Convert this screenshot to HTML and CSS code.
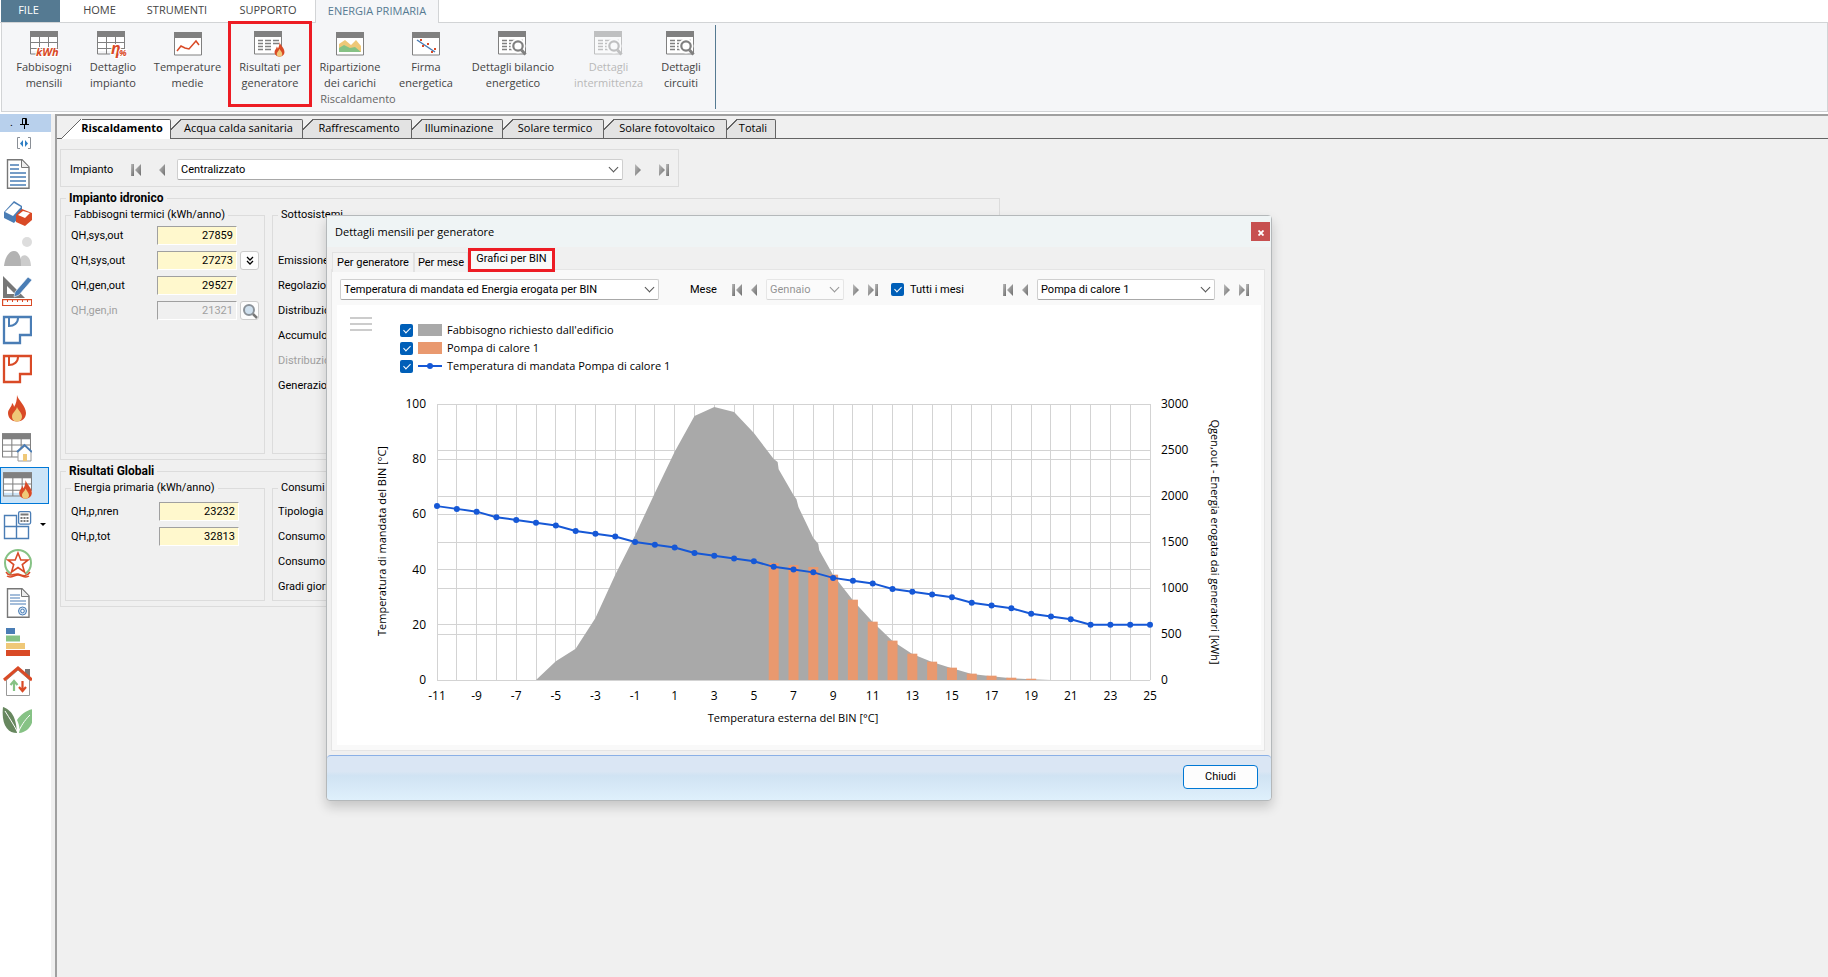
FILE: index.html
```html
<!DOCTYPE html>
<html lang="it">
<head>
    <meta charset="UTF-8">
    <meta name="viewport" content="width=device-width, initial-scale=1.0">
    <title>Energia primaria</title>
    <link rel="stylesheet" href="styles.css">
</head>
<body>
    <!-- Shared symbols -->
    <svg class="sprite" width="0" height="0">
        <defs>
            <linearGradient id="metal" x1="0" y1="0" x2="1" y2="1">
                <stop offset="0" stop-color="#bdbdbd"/>
                <stop offset="1" stop-color="#6e6e6e"/>
            </linearGradient>
            <symbol id="first" viewBox="0 0 10 12"><path d="M0 0h3v12H0z" fill="url(#metal)"/><path d="M10 0v12L4 6z" fill="url(#metal)"/></symbol>
            <symbol id="prev" viewBox="0 0 6 12"><path d="M6 0v12L0 6z" fill="url(#metal)"/></symbol>
            <symbol id="next" viewBox="0 0 6 12"><path d="M0 0v12L6 6z" fill="url(#metal)"/></symbol>
            <symbol id="last" viewBox="0 0 10 12"><path d="M0 0v12L6 6z" fill="url(#metal)"/><path d="M7 0h3v12H7z" fill="url(#metal)"/></symbol>
            <symbol id="window" viewBox="0 0 28 24"><path d="M.5 1.500h27v21.500H.5z" fill="#fff" stroke="#808080"/><path d="M0 0h28v6H0z" fill="#808080"/></symbol>
            <symbol id="grid" viewBox="0 0 28 24"><path d="M0 0h28v20H0z" fill="#fff"/><path d="M.5 5v18H24M9.500 5v18M18.500 5v13M27.500 5v12M0 11.500h28M0 17.500h28" fill="none" stroke="#808080"/><path d="M0 0h28v6H0z" fill="#808080"/></symbol>
            <symbol id="rows" viewBox="0 0 28 24"><use href="#window"/><path d="M4 9.500h5M4 12.500h5M4 15.500h5M4 18.500h5M11 9.500h6M11 12.500h6M11 15.500h6M11 18.500h6M19 9.500h6M19 12.500h6" stroke="#808080" stroke-width="1.300"/></symbol>
            <symbol id="rows-zoom" viewBox="0 0 30 25"><use href="#rows" width="28" height="24"/><circle cx="20" cy="15" r="5" fill="#fff" stroke="#fff" stroke-width="5"/><circle cx="20" cy="15" r="4.700" fill="#fff" stroke="#808080" stroke-width="2.200"/><path d="M23.500 19l4 4.500" stroke="#808080" stroke-width="3"/></symbol>
            <symbol id="flame" viewBox="0 0 20 27"><path d="M10 0c1 5 9 11 9 18 0 5-4 8.500-9 8.500S1 23 1 18C1 14 5 12 5 8c1 1 2 2 2 4 2-3 3-7 3-12z" fill="#d94a26"/><path d="M10 12c1 3 5 6 5 9.500 0 3-2 5-5 5s-5-2-5-5C5 18 9 16 10 12z" fill="#efc878"/></symbol>
            <symbol id="plan" viewBox="0 0 30 30"><path d="M2 2h27v18H18v8H2z" fill="#fff" stroke="currentColor" stroke-width="2.300"/><path d="M7 3v8c5 0 9-3 9-8" fill="none" stroke="currentColor" stroke-width="2"/></symbol>
        </defs>
    </svg>

    <header class="ribbon">
        <nav class="ribbon-tabs">
            <button class="file">FILE</button>
            <button class="home">HOME</button>
            <button class="tools">STRUMENTI</button>
            <button class="support">SUPPORTO</button>
            <button class="active">ENERGIA PRIMARIA</button>
        </nav>
        <div class="ribbon-body">
            <div class="ribbon-group">
                <div class="ribbon-buttons">
                    <button>
                        <svg width="36" height="28" viewBox="-2 0 36 28"><use href="#grid" x="2" width="28" height="24"/><text class="icon-text" x="8" y="25" font-size="11">kWh</text></svg>
                        <span>Fabbisogni<br>mensili</span>
                    </button>
                    <button>
                        <svg width="36" height="28" viewBox="-2 0 36 28"><use href="#grid" width="28" height="24"/><text class="icon-text" x="14" y="23" font-size="16">η</text><text class="icon-text" x="22" y="25" font-size="9">%</text></svg>
                        <span>Dettaglio<br>impianto</span>
                    </button>
                    <button>
                        <svg width="32" height="28" viewBox="0 0 32 28"><use href="#window" x="2" y="1" width="28" height="24"/><path d="M5 20l4-5 4 2 4 1 7-8 3 4" fill="none" stroke="#d94a26" stroke-width="1.500"/></svg>
                        <span>Temperature<br>medie</span>
                    </button>
                    <button class="marked">
                        <svg width="32" height="28" viewBox="0 0 32 28"><use href="#rows" width="28" height="24"/><use href="#flame" x="20" y="11" width="11" height="15"/></svg>
                        <span>Risultati per<br>generatore</span>
                    </button>
                    <button>
                        <svg width="32" height="28" viewBox="0 0 32 28"><use href="#window" x="2" y="1" width="28" height="24"/><path d="M5 21V13l6-4 6 5 5-5 5 6v6z" fill="#efc878"/><path d="M5 21v-4l5-3 6 3 5-1 6 5z" fill="#86c285"/></svg>
                        <span>Ripartizione<br>dei carichi</span>
                    </button>
                    <button>
                        <svg width="32" height="28" viewBox="0 0 32 28"><use href="#window" x="2" y="1" width="28" height="24"/><path d="M7 9l18 12" stroke="#4a7db5" stroke-width="1.500"/><path d="M10 8h2v2h-2zM17 12h2v2h-2zM12 14h2v2h-2zM21 20h2v2h-2zM24 17h2v2h-2z" fill="#d94a26"/></svg>
                        <span>Firma<br>energetica</span>
                    </button>
                    <button>
                        <svg width="30" height="28" viewBox="0 0 30 28"><use href="#rows-zoom" width="30" height="25"/></svg>
                        <span>Dettagli bilancio<br>energetico</span>
                    </button>
                    <button disabled>
                        <svg width="30" height="28" viewBox="0 0 30 28"><use href="#rows-zoom" width="30" height="25"/></svg>
                        <span>Dettagli<br>intermittenza</span>
                    </button>
                    <button>
                        <svg width="30" height="28" viewBox="0 0 30 28"><use href="#rows-zoom" width="30" height="25"/></svg>
                        <span>Dettagli<br>circuiti</span>
                    </button>
                </div>
                <div class="group-name">Riscaldamento</div>
            </div>
        </div>
    </header>

    <div class="workspace">
        <aside class="sidebar">
            <div class="pin-bar">
                <span>.</span>
                <svg width="9" height="12" viewBox="0 0 9 12"><path d="M2.500 7V1.500h4V7M5.500 1v6M0 7.500h9M4.500 8v4" fill="none" stroke="#000"/></svg>
            </div>
            <button class="collapse" aria-label="Comprimi">
                <svg width="14" height="12" viewBox="0 0 14 12"><path d="M3 .5H.5v11H3M11 .5h2.500v11H11" fill="none" stroke="#8a8f96"/><path d="M6 3v7L3 6.500zM8 3v7l3-3.500z" fill="#2f7fc4"/></svg>
            </button>
            <button aria-label="Relazione">
                <svg viewBox="0 0 30 30"><path d="M5.500.7H20L27 8v21.300H5.500z" fill="#fff" stroke="#777" stroke-width="1.400"/><path d="M19.500 1v7.500H27" fill="#eee" stroke="#777"/><path d="M8 6h9M8 10h9M8 14h16M8 18h16M8 22h16M8 26h16" stroke="#4a7db5" stroke-width="1.300"/></svg>
            </button>
            <button aria-label="Strutture">
                <svg viewBox="0 0 30 30"><path d="M2 14L12 3l8 5v8l-8 9-10-5z" fill="#4a7db5"/><path d="M3 14l9-9 7 4-8 9z" fill="#fff"/><path d="M14 17l6-6 10 4v7l-7 6-9-4z" fill="#d94a26"/><path d="M16 17l5-4 7 2-5 5z" fill="#fff"/></svg>
            </button>
            <button aria-label="Ombreggiamenti">
                <svg viewBox="0 0 30 30"><circle cx="25" cy="5" r="5" fill="#ddd"/><path d="M2 29c1-9 5-15 10-15s7 6 8 15z" fill="#b3b3b3"/><path d="M19 29c0-5-1-8 1-10 5-3 9 3 9 10z" fill="#ccc"/></svg>
            </button>
            <button aria-label="Disegno">
                <svg viewBox="0 0 30 30"><path d="M1 0l22 22H1z" fill="#777"/><path d="M5 10l8 8H5z" fill="#fff"/><path d="M12 21l1-5L26 1l4 3-13 15z" fill="#4a7db5" stroke="#fff" stroke-width=".6"/><path d="M.6 23.600h29v6H.6z" fill="#fff" stroke="#d94a26" stroke-width="1.200"/><path d="M5.500 24v2M10.500 24v2M15.500 24v2M20.500 24v2M25.500 24v2" stroke="#d94a26"/></svg>
            </button>
            <button class="blue" aria-label="Locali">
                <svg viewBox="0 0 30 30"><use href="#plan"/></svg>
            </button>
            <button class="red" aria-label="Zone">
                <svg viewBox="0 0 30 30"><use href="#plan"/></svg>
            </button>
            <button aria-label="Centrale termica">
                <svg viewBox="0 0 30 30"><use href="#flame" x="5" y="2" width="20" height="27"/></svg>
            </button>
            <button aria-label="Risultati fabbricato">
                <svg viewBox="0 0 30 30"><use href="#grid" x="0" y="1" width="29" height="25"/><path d="M16 20v9h13v-9l-6-6z" fill="#fff" stroke="#999"/><path d="M15 20l7.500-7 7.500 7" fill="none" stroke="#4a7db5" stroke-width="2"/><path d="M21 22h4v7h-4z" fill="#efc878"/></svg>
            </button>
            <button class="selected" aria-label="Energia primaria">
                <svg viewBox="0 0 30 30"><use href="#grid" x="1" y="1" width="29" height="25"/><use href="#flame" x="16" y="9" width="15" height="19"/></svg>
            </button>
            <button class="with-arrow" aria-label="Calcolo">
                <svg viewBox="0 0 30 30"><path d="M2.500 5.500h12v23h-12zM2.500 16.500h24v12h-24M14.500 16v12" fill="#fff" stroke="#4a7db5" stroke-width="1.400"/><rect x="16.600" y="1.600" width="12" height="12.500" rx="1.500" fill="#fff" stroke="#4a7db5" stroke-width="1.300"/><path d="M18.500 4.500h8M18.500 8h2M21.500 8h2M24.500 8h2M18.500 11h2M21.500 11h2M24.500 11h2" stroke="#777" stroke-width="1.800"/></svg>
            </button>
            <button aria-label="Legge 10">
                <svg viewBox="0 0 30 30"><circle cx="16" cy="14" r="13" fill="none" stroke="#86c285" stroke-width="2" stroke-dasharray="68 14" stroke-dashoffset="-27"/><path d="M16 4l2.800 7H26l-5.700 4.500 2.200 7.500-6.500-4.500L9.500 23l2.200-7.500L6 11h7.200z" fill="#fff" stroke="#d94a26" stroke-width="1.600"/><path d="M4 23c4 6 8 1 12 2s8 4 12-2M5 27c4 3 7-1 11-1s7 4 11 1" fill="none" stroke="#d94a26" stroke-width="1.500"/></svg>
            </button>
            <button aria-label="Attestato">
                <svg viewBox="0 0 30 30"><path d="M5.500.7H20L27 8v21.300H5.500z" fill="#fff" stroke="#777" stroke-width="1.400"/><path d="M19.500 1v7.500H27" fill="#eee" stroke="#777"/><path d="M8 7h10M8 10h10M8 13h16M8 16h16" stroke="#4a7db5" stroke-width="1.200"/><circle cx="20.500" cy="23" r="4" fill="#cfe0f2" stroke="#4a7db5"/><circle cx="20.500" cy="23" r="1.800" fill="#fff" stroke="#4a7db5"/></svg>
            </button>
            <button aria-label="Classi energetiche">
                <svg viewBox="0 0 30 30"><path d="M4 1h9v6H4z" fill="#4a7db5"/><path d="M4 8.500h14v6H4z" fill="#86c285"/><path d="M4 16h19v6H4z" fill="#efc878"/><path d="M4 23h24v6H4z" fill="#d94a26"/></svg>
            </button>
            <button aria-label="Interventi">
                <svg viewBox="0 0 30 30"><path d="M23 3h5v11h-5z" fill="#777"/><path d="M4.500 14v15.500h23V14L16 4z" fill="#fff" stroke="#999"/><path d="M2 14L16 2l14 12" fill="none" stroke="#d94a26" stroke-width="3"/><path d="M12 25V16M8.500 19l3.500-4 3.500 4" fill="none" stroke="#86c285" stroke-width="2.200"/><path d="M20.500 15v9M17 21l3.500 4 3.500-4" fill="none" stroke="#d94a26" stroke-width="2.200"/></svg>
            </button>
            <button aria-label="Ambiente">
                <svg viewBox="0 0 30 30"><path d="M1 2c8 3 13 9 14 26C6 28-1 20 1 2z" fill="#67875f"/><path d="M31 4c-6 1-12 5-16 11 2 4 3 8 2 13 10-1 16-10 14-24z" fill="#86c285"/><path d="M3 6c5 8 9 14 13 22 3-7 6-12 12-18" fill="none" stroke="#fff"/></svg>
            </button>
        </aside>

        <main class="main">
            <nav class="tabs">
                <button class="active">Riscaldamento</button>
                <button>Acqua calda sanitaria</button>
                <button>Raffrescamento</button>
                <button>Illuminazione</button>
                <button>Solare termico</button>
                <button>Solare fotovoltaico</button>
                <button>Totali</button>
            </nav>

            <div class="page">
                <div class="plant-bar">
                    <label for="plant">Impianto</label>
                    <button class="nav" aria-label="Primo"><svg width="10" height="12"><use href="#first"/></svg></button>
                    <button class="nav" aria-label="Precedente"><svg width="6" height="12"><use href="#prev"/></svg></button>
                    <span class="select"><select id="plant"><option>Centralizzato</option></select></span>
                    <button class="nav" aria-label="Successivo"><svg width="6" height="12"><use href="#next"/></svg></button>
                    <button class="nav" aria-label="Ultimo"><svg width="10" height="12"><use href="#last"/></svg></button>
                </div>

                <fieldset class="group hydronic">
                    <legend>Impianto idronico</legend>
                    <div class="columns">
                        <fieldset class="box">
                            <legend>Fabbisogni termici (kWh/anno)</legend>
                            <div class="field"><label for="sys">QH,sys,out</label><input id="sys" type="text" value="27859" readonly></div>
                            <div class="field"><label for="sys2">Q'H,sys,out</label><input id="sys2" type="text" value="27273" readonly>
                                <button class="mini" aria-label="Espandi"><svg width="8" height="10" viewBox="0 0 8 10"><path d="M1 1l3 3 3-3M1 5l3 3 3-3" fill="none" stroke="#000" stroke-width="1.300"/></svg></button>
                            </div>
                            <div class="field"><label for="gen">QH,gen,out</label><input id="gen" type="text" value="29527" readonly></div>
                            <div class="field"><label for="genin" class="off">QH,gen,in</label><input id="genin" type="text" value="21321" disabled>
                                <button class="mini" aria-label="Dettagli"><svg width="16" height="16" viewBox="0 0 16 16"><circle cx="7" cy="7" r="5" fill="#cfe0ee" stroke="#8b9299" stroke-width="2"/><path d="M11 11l4 4" stroke="#777" stroke-width="2.500"/></svg></button>
                            </div>
                        </fieldset>
                        <fieldset class="box wide">
                            <legend>Sottosistemi</legend>
                            <ul class="list">
                                <li></li>
                                <li>Emissione</li>
                                <li>Regolazione</li>
                                <li>Distribuzione</li>
                                <li>Accumulo</li>
                                <li class="off">Distribuzione</li>
                                <li>Generazione</li>
                            </ul>
                        </fieldset>
                    </div>
                </fieldset>

                <fieldset class="group totals">
                    <legend>Risultati Globali</legend>
                    <div class="columns">
                        <fieldset class="box">
                            <legend>Energia primaria (kWh/anno)</legend>
                            <div class="field"><label for="nren">QH,p,nren</label><input id="nren" type="text" value="23232" readonly></div>
                            <div class="field"><label for="tot">QH,p,tot</label><input id="tot" type="text" value="32813" readonly></div>
                        </fieldset>
                        <fieldset class="box wide">
                            <legend>Consumi</legend>
                            <ul class="list">
                                <li>Tipologia vettore</li>
                                <li>Consumo vettore</li>
                                <li>Consumo elettrico</li>
                                <li>Gradi giorno</li>
                            </ul>
                        </fieldset>
                    </div>
                </fieldset>
            </div>
        </main>
    </div>

    <section class="dialog" role="dialog" aria-labelledby="dialogTitle">
        <div class="dialog-title">
            <span id="dialogTitle">Dettagli mensili per generatore</span>
            <button class="close" aria-label="Chiudi finestra"><svg width="6" height="6" viewBox="0 0 6 6"><path d="M.5 .5l5 5M5.500 .5l-5 5" stroke="#fff" stroke-width="1.800"/></svg></button>
        </div>
        <nav class="dialog-tabs">
            <button>Per generatore</button>
            <button>Per mese</button>
            <button class="marked">Grafici per BIN</button>
        </nav>
        <div class="panel">
            <div class="toolbar">
                <span class="select kind"><select aria-label="Grafico"><option>Temperatura di mandata ed Energia erogata per BIN</option></select></span>
                <div class="month">
                    <label for="month">Mese</label>
                    <button class="nav" aria-label="Primo mese"><svg width="10" height="12"><use href="#first"/></svg></button>
                    <button class="nav" aria-label="Mese precedente"><svg width="6" height="12"><use href="#prev"/></svg></button>
                    <span class="select disabled"><select id="month" disabled><option>Gennaio</option></select></span>
                    <button class="nav" aria-label="Mese successivo"><svg width="6" height="12"><use href="#next"/></svg></button>
                    <button class="nav" aria-label="Ultimo mese"><svg width="10" height="12"><use href="#last"/></svg></button>
                </div>
                <label class="check"><input type="checkbox" checked>Tutti i mesi</label>
                <div class="generator">
                    <button class="nav" aria-label="Primo generatore"><svg width="10" height="12"><use href="#first"/></svg></button>
                    <button class="nav" aria-label="Generatore precedente"><svg width="6" height="12"><use href="#prev"/></svg></button>
                    <span class="select"><select aria-label="Generatore"><option>Pompa di calore 1</option></select></span>
                    <button class="nav" aria-label="Generatore successivo"><svg width="6" height="12"><use href="#next"/></svg></button>
                    <button class="nav" aria-label="Ultimo generatore"><svg width="10" height="12"><use href="#last"/></svg></button>
                </div>
            </div>
            <div class="chart-area">
                <div class="chart-head">
                    <button class="menu" aria-label="Menu"><i></i><i></i><i></i></button>
                    <div class="legend">
                        <label><input type="checkbox" checked><i class="swatch grey"></i>Fabbisogno richiesto dall'edificio</label>
                        <label><input type="checkbox" checked><i class="swatch orange"></i>Pompa di calore 1</label>
                        <label><input type="checkbox" checked><svg class="swatch" viewBox="0 0 24 12"><path d="M0 6h24" stroke="#1658d6" stroke-width="2"/><circle cx="12" cy="6" r="3" fill="#1658d6"/></svg>Temperatura di mandata Pompa di calore 1</label>
                    </div>
                </div>
                <svg class="chart" id="chart" viewBox="0 0 924 350"></svg>
            </div>
        </div>
        <footer class="dialog-footer">
            <button>Chiudi</button>
        </footer>
    </section>

    <script src="script.js"></script>
</body>
</html>
```
FILE: styles.css
```css
* {
    box-sizing: border-box;
}

body {
    margin: 0;
    min-height: 100vh;
    display: flex;
    flex-direction: column;
    position: relative;
    background: #f0f0f0;
    color: #000;
    font-family: Roboto, "Liberation Sans", sans-serif;
    font-size: 11px;
    line-height: 16px;
}

button,
input,
select {
    font: inherit;
    color: inherit;
}

button {
    padding: 0;
    border: none;
    background: none;
}

.sprite {
    position: absolute;
}

/* Ribbon */
.ribbon {
    background: #fff;
    font-family: "Open Sans", "Noto Sans", sans-serif;
    color: #444;
    padding-bottom: 2px;
}

.ribbon-tabs {
    display: flex;
    height: 23px;
    padding-left: 1px;
    border-bottom: 1px solid #d2d4d6;
}

.ribbon-tabs button {
    padding-bottom: 2px;
}

.ribbon-tabs .file {
    width: 59px;
    padding-right: 4px;
    background: #557a92;
    color: #fff;
}

.ribbon-tabs .home {
    width: 79px;
}

.ribbon-tabs .tools {
    width: 76px;
}

.ribbon-tabs .support {
    width: 100px;
    padding-left: 6px;
}

.ribbon-tabs .active {
    width: 124px;
    height: 23px;
    background: #f5f6f8;
    color: #557a92;
    border: 1px solid #d2d4d6;
    border-width: 0 1px;
}

.ribbon-body {
    margin-left: 1px;
    height: 89px;
    background: #f5f6f8;
    border: 1px solid #d2d4d6;
    border-top: none;
    display: flex;
}

.ribbon-group {
    margin: 2px 0;
    padding: 6px 8px 0 7px;
    border-right: 1px solid #557a92;
}

.ribbon-buttons {
    display: grid;
    grid-template-columns: 70px 68px 81px 84px 76px 76px 98px 93px 52px;
}

.ribbon-buttons button {
    display: flex;
    flex-direction: column;
    align-items: center;
    position: relative;
}

.ribbon-buttons button:disabled {
    color: #b9b9b9;
}

.ribbon-buttons button:disabled svg {
    opacity: 0.45;
}

.ribbon-buttons .marked::after {
    content: "";
    position: absolute;
    inset: -10px 0 -16px 0;
    border: 3px solid #ed1c24;
}

.group-name {
    text-align: center;
    color: #666;
}

.icon-text {
    font-family: "Open Sans", sans-serif;
    font-weight: bold;
    font-style: italic;
    fill: #d94a26;
    stroke: #fff;
    stroke-width: 2px;
    paint-order: stroke;
}

/* Left toolbar */
.workspace {
    flex: 1;
    display: flex;
}

.sidebar {
    width: 51px;
    background: #fff;
    display: flex;
    flex-direction: column;
}

.pin-bar {
    height: 18px;
    padding-left: 10px;
    display: flex;
    align-items: center;
    gap: 7px;
    background: #b8d0ec;
}

.sidebar .collapse {
    height: 22px;
    padding: 0 0 0 17px;
}

.sidebar button {
    height: 39px;
    padding-left: 2px;
    display: flex;
    align-items: center;
    flex-shrink: 0;
}

.sidebar button:not(.collapse) svg {
    width: 30px;
    height: 30px;
}

.sidebar .selected {
    width: 49px;
    height: 37px;
    margin: 1px 0;
    padding-left: 1px;
    border: 1px solid #0078d7;
    background: #cce4f7;
}

.sidebar .with-arrow::after {
    content: "";
    margin-left: 8px;
    border: 3px solid transparent;
    border-top-color: #000;
    border-bottom: none;
}

.sidebar .blue {
    color: #4a7db5;
}

.sidebar .red {
    color: #d94a26;
}

/* Main area */
.main {
    flex: 1;
    margin-left: 4px;
    border-left: 2px solid #a0a0a0;
    border-top: 2px solid #a0a0a0;
}

.tabs {
    display: grid;
    grid-template-columns: 109px 132px 109px 91px 101px 123px 49px;
    height: 23px;
    padding: 3px 0 0 5px;
    border-bottom: 1px solid #646464;
    font-family: "Open Sans", "Noto Sans", sans-serif;
}

.tabs button {
    height: 19px;
    padding: 0 0 2px 4px;
    border-right: 1px solid #646464;
    border-top-right-radius: 2px;
    background:
        linear-gradient(#646464, #646464) 11px 0 / 100% 1px no-repeat,
        linear-gradient(135deg, #f0f0f0 7px, #646464 7px, #646464 8px, #e3e3e3 8px);
}

.tabs .active {
    height: 20px;
    padding: 0 0 3px 12px;
    font-weight: bold;
    background:
        linear-gradient(#646464, #646464) 20px 0 / 100% 1px no-repeat,
        linear-gradient(135deg, #f0f0f0 13px, #646464 13px, #646464 14px, #fff 14px);
}

.page {
    padding: 10px 0 0 3px;
}

.plant-bar {
    width: 619px;
    height: 38px;
    padding: 3px 0 0 9px;
    display: flex;
    align-items: center;
    border: 1px solid #dcdcdc;
}

.plant-bar label {
    width: 61px;
}

.plant-bar .nav + .nav {
    margin-left: 18px;
}

.plant-bar .select {
    width: 446px;
    margin: 0 12px;
}

.nav {
    display: flex;
    flex-shrink: 0;
}

.select {
    display: block;
    position: relative;
}

.select select {
    display: block;
    width: 100%;
    height: 21px;
    padding: 0 0 0 3px;
    appearance: none;
    background: #fff;
    border: 1px solid #cfcfcf;
    border-bottom-color: #a8a8a8;
    border-radius: 2px;
}

.select::after {
    content: "";
    position: absolute;
    right: 6px;
    top: 5px;
    width: 6px;
    height: 6px;
    border: 1px solid #555;
    border-width: 0 1px 1px 0;
    transform: rotate(45deg);
}

.select.disabled {
    opacity: 0.6;
}

.group,
.box {
    margin: 0;
    padding: 0;
    border: 1px solid #dcdcdc;
    min-width: 0;
}

.group {
    width: 940px;
    margin-top: 3px;
}

.group > legend {
    margin-left: 5px;
    padding: 0 3px;
    font-size: 12px;
    font-weight: bold;
}

.columns {
    display: flex;
    gap: 7px;
    padding: 1px 5px 5px 4px;
}

.box {
    width: 200px;
    padding-left: 5px;
}

.box.wide {
    flex: 1;
}

.box > legend {
    padding: 0 3px;
}

.hydronic .box {
    height: 247px;
}

.totals .box {
    height: 121px;
}

.totals .field:first-of-type,
.totals .list {
    margin-top: 3px;
}

.field {
    height: 25px;
    display: flex;
    align-items: center;
}

.field label {
    width: 86px;
}

.totals .field label {
    width: 88px;
}

.off {
    color: #a0a0a0;
}

.field input {
    width: 80px;
    height: 19px;
    padding: 0 3px;
    text-align: right;
    background: #fff8cd;
    border: 1px solid #fff;
    border-top-color: #a0a0a0;
    border-left-color: #a0a0a0;
}

.field input:disabled {
    background: #f0f0f0;
    color: #a0a0a0;
}

.mini {
    width: 19px;
    height: 19px;
    margin-left: 3px;
    display: flex;
    align-items: center;
    justify-content: center;
    background: #fdfdfd;
    border: 1px solid #ccc;
    border-radius: 3px;
}

.list {
    margin: 0;
    padding: 0;
    list-style: none;
}

.list li {
    height: 25px;
    line-height: 25px;
}

/* Dialog floating over the page */
.dialog {
    position: absolute;
    left: 326px;
    top: 215px;
    width: 946px;
    background: #f0f0f0;
    border: 1px solid #b4b8ba;
    border-radius: 4px;
    box-shadow: 0 6px 12px rgba(0, 0, 0, 0.18);
}

.dialog-title {
    height: 31px;
    padding: 0 1px 0 8px;
    display: flex;
    justify-content: space-between;
    align-items: center;
    background: #eff4f5;
    font-family: "Open Sans", "Noto Sans", sans-serif;
}

.close {
    width: 19px;
    height: 19px;
    background: #c75050;
}

.dialog-tabs {
    display: grid;
    grid-template-columns: 82px 54px 87px;
    height: 22px;
    padding: 5px 0 0 5px;
}

.dialog-tabs button {
    border: 1px solid #e2e2e2;
    border-bottom: none;
    background: #f3f3f3;
}

.dialog-tabs .marked {
    height: 24px;
    margin-top: -4px;
    padding-bottom: 2px;
    position: relative;
    border: 3px solid #ed1c24;
    background: #f9f9f9;
}

.panel {
    margin: 0 6px 4px 4px;
    padding: 9px 3px 5px 5px;
    background: #f9f9f9;
    border: 1px solid #e5e5e5;
}

.toolbar {
    height: 26px;
    padding: 0 12px 5px 3px;
    display: flex;
    align-items: center;
}

.toolbar .kind {
    width: 319px;
    margin-right: 31px;
}

.month,
.generator {
    display: flex;
    align-items: center;
    gap: 9px;
}

.month label {
    width: 33px;
}

.month .select {
    width: 78px;
}

.generator {
    margin-left: auto;
}

.generator .select {
    width: 178px;
}

.check {
    margin-left: 13px;
    display: flex;
    align-items: center;
    gap: 6px;
}

input[type="checkbox"] {
    width: 13px;
    height: 13px;
    margin: 0;
    appearance: none;
    background: #005fb8;
    border-radius: 2px;
    display: grid;
    place-items: center;
}

input[type="checkbox"]:checked::after {
    content: "";
    width: 3px;
    height: 6px;
    margin-bottom: 2px;
    border: 1px solid #fff;
    border-width: 0 1px 1px 0;
    transform: rotate(45deg);
}

.chart-area {
    padding-bottom: 18px;
    background: #fff;
    font-family: "Open Sans", "Noto Sans", sans-serif;
}

.chart-head {
    display: flex;
    gap: 28px;
    padding: 12px 0 2px 13px;
}

.menu {
    width: 22px;
    height: 16px;
    display: flex;
    flex-direction: column;
    gap: 4px;
}

.menu i {
    height: 2px;
    width: 100%;
    background: #ccc;
}

.legend {
    padding-top: 4px;
}

.legend label {
    height: 18px;
    display: flex;
    align-items: center;
    gap: 5px;
}

.swatch {
    width: 24px;
    height: 12px;
}

.swatch.grey {
    background: #a9a9a9;
}

.swatch.orange {
    background: #e9996f;
}

.chart {
    display: block;
    width: 100%;
}

.chart .grid {
    stroke: #d3d3d3;
}

.chart .temperature {
    fill: none;
    stroke: #1658d6;
    stroke-width: 2px;
}

.chart .tick {
    font-size: 12px;
}

.dialog-footer {
    height: 45px;
    padding: 0 13px 2px;
    display: flex;
    align-items: center;
    justify-content: flex-end;
    background: linear-gradient(#dae6f4 35%, #d0e3f3 45%, #dff0fc);
    border-top: 1px solid #8ab0e6;
    border-radius: 4px;
}

.dialog-footer button {
    width: 75px;
    height: 24px;
    background: #fdfdfd;
    border: 1px solid #0078d4;
    border-radius: 4px;
}
```
FILE: script.js
```js
const chart = document.getElementById('chart');

// Plot area inside the SVG
const plot = { left: 100, right: 813, top: 27, bottom: 303 };
const firstBin = -11;
const lastBin = 25;

const temperatures = [63, 62, 61, 59, 58, 57, 56, 54, 53, 52, 50, 49, 48, 46, 45, 44, 43, 41, 40,
    39, 37, 36, 35, 33, 32, 31, 30, 28, 27, 26, 24, 23, 22, 20, 20, 20, 20];

// Building demand per bin, kWh
const demand = [[-6, 0], [-5, 203], [-4, 340], [-3, 674], [-2, 1145], [-1, 1572], [0, 2033],
    [1, 2482], [2, 2870], [3, 2967], [4, 2913], [5, 2685], [6, 2402], [6.2, 2370], [6.25, 2290],
    [7, 2011], [7.15, 1965], [7.25, 1880], [8, 1543], [8.25, 1480], [8.3, 1410], [9, 1141],
    [10, 866], [11, 630], [12, 425], [13, 283], [14, 196], [15, 127], [16, 65], [17, 40],
    [18, 18], [19, 7], [20, 0]];

// Energy supplied by the heat pump, kWh
const supplied = [[6, 1272], [7, 1250], [8, 1228], [9, 1145], [10, 873], [11, 634], [12, 428],
    [13, 286], [14, 199], [15, 134], [16, 69], [17, 47], [18, 25], [19, 14]];

const x = bin => plot.left + (bin - firstBin) / (lastBin - firstBin) * (plot.right - plot.left);
const yTemp = t => plot.bottom - t / 100 * (plot.bottom - plot.top);
const yEnergy = e => plot.bottom - e / 3000 * (plot.bottom - plot.top);
const crisp = v => Math.floor(v) + 0.5;

function add(tag, attributes, text) {
    const el = document.createElementNS('http://www.w3.org/2000/svg', tag);
    Object.entries(attributes).forEach(([key, value]) => el.setAttribute(key, value));
    if (text !== undefined) el.textContent = text;
    chart.appendChild(el);
}

function gridLine(x1, y1, x2, y2) {
    add('line', { class: 'grid', x1, y1, x2, y2 });
}

// Grid and axis values
for (let bin = firstBin; bin <= lastBin; bin++) {
    gridLine(crisp(x(bin)), plot.top, crisp(x(bin)), plot.bottom);
    if (bin % 2 !== 0) {
        add('text', { class: 'tick', x: x(bin), y: 323, 'text-anchor': 'middle' }, bin);
    }
}
for (let t = 0; t <= 100; t += 20) {
    gridLine(plot.left, crisp(yTemp(t)), plot.right, crisp(yTemp(t)));
    add('text', { class: 'tick', x: 89, y: yTemp(t) + 4, 'text-anchor': 'end' }, t);
}
for (let e = 0; e <= 3000; e += 500) {
    gridLine(plot.left, crisp(yEnergy(e)), plot.right, crisp(yEnergy(e)));
    add('text', { class: 'tick', x: 824, y: yEnergy(e) + 4 }, e);
}

// Series
add('polygon', { fill: '#a9a9a9', points: demand.map(([bin, e]) => `${x(bin)},${yEnergy(e)}`).join(' ') });
supplied.forEach(([bin, e]) => {
    add('rect', { fill: '#e9996f', x: x(bin) - 5, y: yEnergy(e), width: 10, height: plot.bottom - yEnergy(e) });
});
add('polyline', {
    class: 'temperature',
    points: temperatures.map((t, i) => `${x(firstBin + i)},${yTemp(t)}`).join(' ')
});
temperatures.forEach((t, i) => {
    add('circle', { fill: '#1658d6', cx: x(firstBin + i), cy: yTemp(t), r: 3 });
});

// Axis titles
add('text', { x: 456, y: 345, 'text-anchor': 'middle' }, 'Temperatura esterna del BIN [°C]');
add('text', { transform: 'translate(49 164) rotate(-90)', 'text-anchor': 'middle' }, 'Temperatura di mandata del BIN [°C]');
add('text', { transform: 'translate(874 165) rotate(90)', 'text-anchor': 'middle' }, 'Qgen,out - Energia erogata dai generatori [kWh]');
```
